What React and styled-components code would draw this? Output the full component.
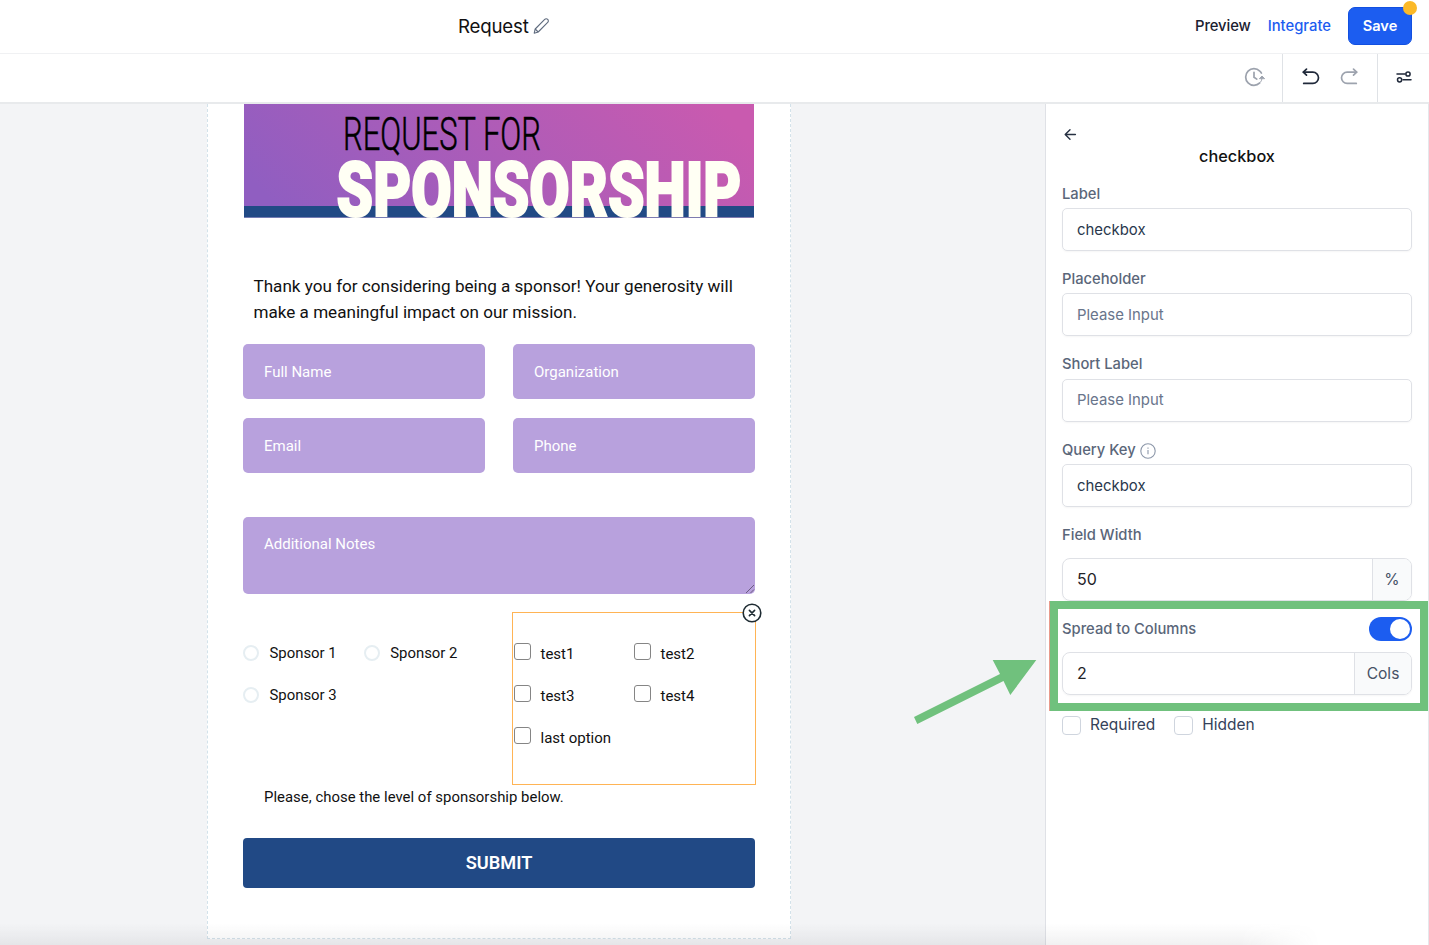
import React from 'react';
import styled, { createGlobalStyle } from 'styled-components';

const GlobalStyle = createGlobalStyle`
	*,
	*::before,
	*::after {
		box-sizing: border-box;
	}
	body {
		margin: 0;
		overflow: hidden;
		background: #f3f4f6;
		font-family: Inter, sans-serif;
	}
`;

const Screen = styled.div`
	position: relative;
	display: flex;
	flex-direction: column;
	width: 1429px;
	height: 945px;
	overflow: hidden;
`;

const Header = styled.header`
	display: flex;
	align-items: center;
	flex: 0 0 54px;
	padding: 0 17px 2px 458px;
	background: #fff;
	border-bottom: 1px solid #f0f1f3;
`;

const FormName = styled.div`
	display: flex;
	align-items: center;
	gap: 4px;
	flex: 1;
	padding-top: 1px;
	font-size: 18.7px;
	letter-spacing: -0.2px;
	color: #111;
`;

const HeaderLink = styled.a`
	margin-right: 17px;
	padding-top: 1px;
	font-size: 14.8px;
	font-weight: 500;
	letter-spacing: ${({ $active }) => ($active ? '0' : '-0.1px')};
	color: ${({ $active }) => ($active ? '#1c5df0' : '#1b2130')};
`;

const SaveButton = styled.button`
	position: relative;
	width: 64px;
	height: 38px;
	padding: 0;
	border: 1px solid #1250e0;
	border-radius: 7px;
	background: #1c5df0;
	color: #fff;
	font: 600 14.6px Inter, sans-serif;
`;

const Dot = styled.span`
	position: absolute;
	top: -7px;
	right: -6px;
	width: 14px;
	height: 14px;
	border-radius: 50%;
	background: #fbb928;
`;

const Toolbar = styled.div`
	display: flex;
	justify-content: flex-end;
	flex: 0 0 50px;
	background: #fff;
	border-bottom: 2px solid #e8eaec;
`;

const ToolGroup = styled.div`
	display: flex;
	align-items: center;
	justify-content: center;
	gap: 18px;
	width: ${({ $width }) => $width}px;
	padding-bottom: 2px;
	border-left: ${({ $line }) => ($line ? '1px solid #dfe2e6' : 'none')};
`;

const Body = styled.div`
	display: flex;
	flex: 1;
	min-height: 0;
`;

const Canvas = styled.main`
	flex: 1;
	padding-left: 207px;
	background: #f3f4f6;
`;

const Page = styled.section`
	width: 584px;
	height: 835px;
	padding: 0 35px;
	border: 1px dashed #d3e2ea;
	border-top: none;
	background: #fff;
	color: #111;
	font-family: Roboto, sans-serif;
`;

const Banner = styled.svg`
	display: block;
	margin-left: 1px;
	overflow: visible;
`;

const Intro = styled.p`
	margin: 56.5px 0 19px 10.5px;
	font-size: 17.1px;
	line-height: 25.6px;
	white-space: nowrap;
`;

const FieldGrid = styled.div`
	display: grid;
	grid-template-columns: 242px 242px;
	gap: 19.5px 28px;
`;

const Field = styled.div`
	height: 54.5px;
	padding: 0 21px;
	border-radius: 5px;
	background: #b8a1dd;
	color: #fff;
	font-size: 15px;
	line-height: 56px;
`;

const NotesField = styled(Field)`
	display: flex;
	justify-content: space-between;
	align-items: flex-end;
	width: 512px;
	height: 77px;
	margin: 44.5px 0 18px;
	padding-right: 0;
	line-height: 55px;

	& > span {
		align-self: flex-start;
	}
`;

const Choices = styled.div`
	display: grid;
	grid-template-columns: 269px 244px;
`;

const RadioList = styled.div`
	display: flex;
	flex-wrap: wrap;
	align-content: flex-start;
	gap: 24px 27px;
	padding-top: 32px;
	font-size: 14.9px;
	line-height: 18px;
`;

const RadioItem = styled.div`
	display: flex;
	align-items: center;
	gap: 10.5px;

	&::before {
		content: '';
		width: 16px;
		height: 16px;
		border: 2px solid #e6eef2;
		border-radius: 50%;
	}
`;

const SelectedBlock = styled.div`
	position: relative;
	display: grid;
	grid-template-columns: 120px 1fr;
	grid-auto-rows: 41.7px;
	height: 172.5px;
	padding: 30px 0 0 1px;
	border: 1px solid #ffb455;
	font-size: 15px;
	line-height: 20px;
`;

const CheckItem = styled.div`
	display: flex;
	align-items: flex-start;
	gap: 9.5px;

	&::before {
		content: '';
		width: 17px;
		height: 17px;
		border: 1px solid #858585;
		border-radius: 3px;
	}

	& > span {
		padding-top: 1px;
	}
`;

const RemoveIcon = styled.svg`
	position: absolute;
	top: -10px;
	right: -7px;
`;

const Note = styled.p`
	margin: 2px 0 31px 21px;
	font-size: 14.9px;
	line-height: 20px;
	letter-spacing: 0.02px;
`;

const SubmitButton = styled.button`
	display: block;
	width: 512px;
	height: 50px;
	border: none;
	border-radius: 4px;
	background: #214985;
	color: #fff;
	font: 600 18.2px Roboto, sans-serif;
`;

const Panel = styled.aside`
	width: 384px;
	padding: 22px 16px 0;
	border-left: 1px solid #dfe1e6;
	border-right: 1px solid #e5e7eb;
	background: #fff;
`;

const PanelTitle = styled.h2`
	margin: 3px 0 17px;
	font-size: 16.3px;
	font-weight: 500;
	line-height: 22px;
	text-align: center;
	color: #111;
`;

const PanelField = styled.div`
	height: 85.4px;
`;

const FieldLabel = styled.div`
	display: flex;
	align-items: center;
	gap: 4px;
	height: ${({ $height }) => $height || 24}px;
	padding-bottom: ${({ $gap = 5 }) => $gap}px;
	font-size: 14.75px;
	font-weight: 500;
	color: #5a6679;
`;

const TextBox = styled.div`
	display: flex;
	align-items: center;
	height: 43px;
	padding-left: 14px;
	border: 1px solid #dfe1e6;
	border-radius: 5px;
	box-shadow: 0 1px 2px rgba(0, 0, 0, 0.04);
	font-size: 14.9px;
	color: ${({ $empty }) => ($empty ? '#69758b' : '#29374d')};
`;

const NumberBox = styled(TextBox)`
	justify-content: space-between;
	border-radius: 8px;
	overflow: hidden;
	font-size: 16px;
	color: #1f2328;
`;

const Unit = styled.span`
	display: flex;
	align-items: center;
	justify-content: center;
	width: ${({ $width }) => $width}px;
	height: 100%;
	border-left: 1px solid #dfe1e6;
	background: #f9fafb;
	color: #465266;
	font-size: 15.6px;
`;

const SpreadRow = styled.div`
	display: flex;
	justify-content: space-between;
	align-items: center;
	height: 24px;
	margin: 16px 0 11px;
`;

const Toggle = styled.div`
	display: flex;
	justify-content: flex-end;
	width: 43px;
	height: 24px;
	margin-top: 1px;
	padding: 2px;
	border-radius: 12px;
	background: #1c5df0;

	&::after {
		content: '';
		width: 20px;
		height: 20px;
		border-radius: 50%;
		background: #fff;
	}
`;

const Flags = styled.div`
	display: flex;
	gap: 19px;
	margin-top: 20.5px;
`;

const Flag = styled.div`
	display: flex;
	align-items: center;
	gap: 9px;
	font-size: 15.5px;
	line-height: 20px;
	color: #35425a;

	&::before {
		content: '';
		width: 19px;
		height: 19px;
		border: 1px solid #cfd5de;
		border-radius: 4px;
	}
`;

const Highlight = styled.div`
	position: absolute;
	left: 1050px;
	top: 601px;
	width: 378px;
	height: 110px;
	border: 8px solid #70c17d;
	box-shadow: -1px 0 0 #e99a8c;
`;

const Arrow = styled.svg`
	position: absolute;
	left: 910px;
	top: 655px;
`;

const BottomShade = styled.div`
	position: absolute;
	left: 0;
	bottom: 0;
	width: 1320px;
	height: 22px;
	background: linear-gradient(rgba(60, 60, 70, 0), rgba(60, 60, 70, 0.07));
	mask-image: linear-gradient(90deg, #000 94%, transparent);
`;

const PencilIcon = () => (
	<svg width="17" height="18" viewBox="0 0 17 18" fill="none" stroke="#5f6b7e" strokeWidth="1.1" strokeLinejoin="round">
		<path d="M1.2 16.2 2.2 12 11.7 2.4a2.1 2.1 0 0 1 3 0 2.1 2.1 0 0 1 0 3L5.2 15z" />
		<path d="m2.2 12 3 3" />
	</svg>
);

const HistoryIcon = () => (
	<svg width="22" height="22" viewBox="0 0 22 22" fill="none" stroke="#9ca2ad" strokeWidth="1.7" strokeLinecap="round">
		<path d="M16.8 16.9A8.3 8.3 0 1 1 16.8 5.1a8.3 8.3 0 0 1 1.6 2" />
		<path d="M11 6.3v5l2.8 1.8" />
		<path d="M16.6 12.4 19 10l2.4 2.4zM19 12.5q-.2 2-1.2 3.2" fill="#9ca2ad" strokeWidth="0.9" />
	</svg>
);

const UndoIcon = ({ flip, color }) => (
	<svg width="20" height="20" viewBox="0 0 20 20" fill="none" stroke={color} strokeWidth="1.7" strokeLinecap="round" strokeLinejoin="round">
		<g transform={flip ? 'matrix(-1 0 0 1 20.5 0)' : 'translate(-.5 0)'}>
			<path d="M6 2.2 2.8 5.2 6 8.2" />
			<path d="M3 5.2h9.4a5.6 5.6 0 0 1 0 11.2H3.2" />
		</g>
	</svg>
);

const SlidersIcon = () => (
	<svg width="18" height="16" viewBox="0 0 18 16" fill="none" stroke="#20293a" strokeWidth="1.5" strokeLinecap="round">
		<path d="M2 5h8M8 10.8h8" />
		<circle cx="13" cy="5" r="2.1" />
		<circle cx="4.6" cy="10.8" r="2.1" />
	</svg>
);

const ArrowIcon = styled.svg`
	display: block;
`;

const BackIcon = () => (
	<ArrowIcon width="16" height="16" viewBox="0 0 16 16" fill="none" stroke="#273142" strokeWidth="1.4" strokeLinecap="round" strokeLinejoin="round">
		<path d="M13.4 8.5H3.4M8 3.7 3.2 8.5 8 13.3" />
	</ArrowIcon>
);

const InfoIcon = () => (
	<svg width="16" height="16" viewBox="0 -1 16 16" fill="none" stroke="#8c97a9" strokeWidth="1.1" overflow="visible">
		<circle cx="8" cy="8" r="7.2" />
		<path d="M8 7v4.2M8 4.6v1.2" />
	</svg>
);

const fields = ['Full Name', 'Organization', 'Email', 'Phone'];
const sponsors = ['Sponsor 1', 'Sponsor 2', 'Sponsor 3'];
const options = ['test1', 'test2', 'test3', 'test4', 'last option'];

const settings = [
	{ label: 'Label', value: 'checkbox' },
	{ label: 'Placeholder' },
	{ label: 'Short Label' },
	{ label: 'Query Key', value: 'checkbox', info: true },
];

const SponsorBanner = () => (
	<Banner width="510" height="113.5" viewBox="0 0 510 113.5">
		<defs>
			<linearGradient id="banner" gradientUnits="userSpaceOnUse" x1="120" y1="190" x2="390" y2="-80">
				<stop offset="0" stopColor="#905ec1" />
				<stop offset="1" stopColor="#c95aaf" />
			</linearGradient>
		</defs>
		<rect width="510" height="113.5" fill="url(#banner)" />
		<rect y="102" width="510" height="11.5" fill="#214a85" />
		<text x="99" y="45.5" fontFamily="Roboto" fontWeight="300" fontSize="46.5" stroke="#000" strokeWidth="0.5" textLength="198" lengthAdjust="spacingAndGlyphs">REQUEST FOR</text>
		<text x="92.5" y="112" fontFamily="Roboto" fontWeight="900" fontSize="76" fill="#fffff4" stroke="#fffff4" strokeWidth="2.2" textLength="405" lengthAdjust="spacingAndGlyphs">SPONSORSHIP</text>
	</Banner>
);

const FormPreview = () => (
	<Page>
		<SponsorBanner />
		<Intro>
			Thank you for considering being a sponsor! Your generosity will<br />
			make a meaningful impact on our mission.
		</Intro>
		<FieldGrid>
			{fields.map(name => <Field key={name}>{name}</Field>)}
		</FieldGrid>
		<NotesField>
			<span>Additional Notes</span>
			<svg width="12" height="12" viewBox="0 0 12 12" stroke="#6b5b80" strokeWidth="1">
				<path d="m3 11 8-8M7.5 11l3.5-3.5" />
			</svg>
		</NotesField>
		<Choices>
			<RadioList>
				{sponsors.map(name => <RadioItem key={name}>{name}</RadioItem>)}
			</RadioList>
			<SelectedBlock>
				{options.map(name => <CheckItem key={name}><span>{name}</span></CheckItem>)}
				<RemoveIcon width="20" height="20" viewBox="0 0 20 20" fill="#fff" stroke="#1f2c33" strokeWidth="1.6" strokeLinecap="round">
					<circle cx="10" cy="10" r="8.8" />
					<path d="m7.4 7.4 5.2 5.2M12.6 7.4l-5.2 5.2" />
				</RemoveIcon>
			</SelectedBlock>
		</Choices>
		<Note>Please, chose the level of sponsorship below.</Note>
		<SubmitButton>SUBMIT</SubmitButton>
	</Page>
);

const SettingsPanel = () => (
	<Panel>
		<BackIcon />
		<PanelTitle>checkbox</PanelTitle>
		{settings.map(({ label, value, info }) => (
			<PanelField key={label}>
				<FieldLabel>{label}{info && <InfoIcon />}</FieldLabel>
				<TextBox $empty={!value}>{value || 'Please Input'}</TextBox>
			</PanelField>
		))}
		<FieldLabel $height={32} $gap={13}>Field Width</FieldLabel>
		<NumberBox>50<Unit $width={39}>%</Unit></NumberBox>
		<SpreadRow>
			<FieldLabel $height={22} $gap={0}>Spread to Columns</FieldLabel>
			<Toggle />
		</SpreadRow>
		<NumberBox>2<Unit $width={57}>Cols</Unit></NumberBox>
		<Flags>
			<Flag>Required</Flag>
			<Flag>Hidden</Flag>
		</Flags>
	</Panel>
);

const App = () => {
	return (
		<Screen>
			<GlobalStyle />
			<Header>
				<FormName>Request <PencilIcon /></FormName>
				<HeaderLink>Preview</HeaderLink>
				<HeaderLink $active>Integrate</HeaderLink>
				<SaveButton>Save<Dot /></SaveButton>
			</Header>
			<Toolbar>
				<ToolGroup $width={56}><HistoryIcon /></ToolGroup>
				<ToolGroup $width={95} $line><UndoIcon color="#20293a" /><UndoIcon flip color="#9da3ae" /></ToolGroup>
				<ToolGroup $width={52} $line><SlidersIcon /></ToolGroup>
			</Toolbar>
			<Body>
				<Canvas><FormPreview /></Canvas>
				<SettingsPanel />
			</Body>
			<BottomShade />
			<Highlight />
			<Arrow width="130" height="75" viewBox="910 655 130 75" fill="#70c17d">
				<path d="M914 717 1000 674 992.7 660H1036.3L1010.3 695 1003.5 681 917.3 724z" />
			</Arrow>
		</Screen>
	);
};

export default App;
